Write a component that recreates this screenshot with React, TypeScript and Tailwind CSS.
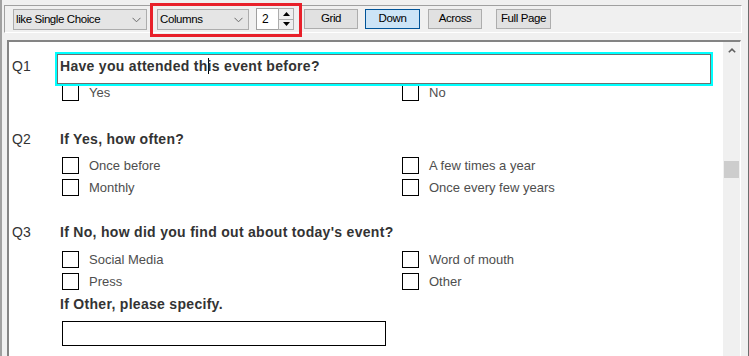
import React from "react";

const Chevron = () => (
  <svg width="9" height="6" viewBox="0 0 9 6" className="shrink-0">
    <polyline points="0.5,0.8 4.5,4.8 8.5,0.8" fill="none" stroke="#6a6a6a" strokeWidth="1" />
  </svg>
);

const Select = ({ label, className }: { label: string; className: string }) => (
  <div
    className={
      "h-[21px] flex items-center justify-between pl-[2px] pr-[5px] bg-[#e5e5e5] border border-[#adadad] " + className
    }
  >
    <span className="text-[11.5px] tracking-[-0.4px] text-black leading-none">{label}</span>
    <Chevron />
  </div>
);

const Button = ({ label, active, className }: { label: string; active?: boolean; className: string }) => (
  <div
    className={
      "h-[20px] flex items-center justify-center text-[11.5px] tracking-[-0.4px] text-black border " +
      (active ? "bg-[#cce4f7] border-[#005499] " : "bg-[#e1e1e1] border-[#adadad] ") +
      className
    }
  >
    {label}
  </div>
);

const Spinner = () => (
  <div className="flex ml-[7px] -mt-[1px]">
    <div className="w-[22px] h-[22px] bg-white border border-[#a0a0a0] border-r-0 pl-[5px] flex items-center text-[12px]">
      2
    </div>
    <div className="w-[16px] h-[22px] border border-[#adadad] bg-[#efefef] flex flex-col">
      <div className="flex-1 flex items-center justify-center border-b border-[#adadad]">
        <svg width="7" height="4" viewBox="0 0 7 4">
          <polygon points="0,4 3.5,0 7,4" fill="#000" />
        </svg>
      </div>
      <div className="flex-1 flex items-center justify-center">
        <svg width="7" height="4" viewBox="0 0 7 4">
          <polygon points="0,0 3.5,4 7,0" fill="#000" />
        </svg>
      </div>
    </div>
  </div>
);

const Option = ({ label }: { label: string }) => (
  <div className="flex items-center h-[22px] pl-[7px]">
    <div className="w-[17px] h-[17px] border border-black bg-white shrink-0" />
    <span className="ml-[10px] text-[13px] text-[#4e4e4e] leading-none">{label}</span>
  </div>
);

const Options = ({ items, className }: { items: string[]; className: string }) => (
  <div className={"grid grid-cols-[340px_1fr] grid-flow-col grid-rows-2 " + className}>
    {items.map((it) => (
      <Option key={it} label={it} />
    ))}
  </div>
);

const Options1 = ({ left, right, className }: { left: string; right: string; className: string }) => (
  <div className={"grid grid-cols-[340px_1fr] " + className}>
    <Option label={left} />
    <Option label={right} />
  </div>
);

const Label = ({ text, className }: { text: string; className?: string }) => (
  <div className={"w-[43px] shrink-0 text-[14px] leading-[18px] text-[#333] " + (className ?? "")}>{text}</div>
);

const Title = ({ children, className }: { children: React.ReactNode; className?: string }) => (
  <div className={"text-[14px] leading-[18px] font-bold tracking-[0.3px] text-[#333] " + (className ?? "")}>
    {children}
  </div>
);

export default function App() {
  return (
    <div className="w-[749px] h-[356px] overflow-hidden bg-[#f0f0f0] flex flex-col border-l-2 border-[#a0a0a0] border-r border-r-[#6d6d6d] font-['Liberation_Sans',Arial,sans-serif]">
      {/* toolbar */}
      <div className="h-[40px] pt-[5px] pl-[2px] shrink-0">
        <div className="w-[738px] h-[28px] border-t border-l border-[#a0a0a0] border-b border-r border-b-white border-r-white flex items-start">
          <Select label="like Single Choice" className="w-[134px] ml-[8px] mt-[3px]" />
          <div className="w-[152px] h-[34px] ml-[3px] -mt-[3px] border-[3px] border-[#e8202a] flex items-start pl-[4px] pt-[3px]">
            <Select label="Columns" className="w-[92px]" />
            <Spinner />
          </div>
          <Button label="Grid" className="w-[54px] ml-[2px] mt-[3px]" />
          <Button label="Down" active className="w-[55px] ml-[7px] mt-[3px]" />
          <Button label="Across" className="w-[54px] ml-[8px] mt-[3px]" />
          <Button label="Full Page" className="w-[55px] ml-[14px] mt-[3px]" />
        </div>
      </div>

      {/* page */}
      <div className="flex-1 ml-[5px] w-[734px] border-t-2 border-l-2 border-[#848484] border-r border-r-white flex">
        <div className="w-[714px] bg-white pt-[10px] pl-[3px] overflow-hidden">
          {/* Q1 */}
          <div className="flex">
            <Label text="Q1" className="mt-[5px]" />
            <div>
              <div className="relative z-10 w-[658px] border-2 border-[#00ffff]">
                <div className="h-[30px] border border-[#6f6f6f] pt-[2px] pl-[2px]">
                  <Title>
                    Have you attended th
                    <span className="inline-block w-0 h-[16px] border-l border-black align-[-3px] -mr-px" />
                    is event before?
                  </Title>
                </div>
              </div>
              <Options1 left="Yes" right="No" className="-mt-[5px]" />
            </div>
          </div>

          {/* Q2 */}
          <div className="flex mt-[27px]">
            <Label text="Q2" />
            <div>
              <Title className="pl-[5px]">If Yes, how often?</Title>
              <Options
                items={["Once before", "Monthly", "A few times a year", "Once every few years"]}
                className="mt-[6px]"
              />
            </div>
          </div>

          {/* Q3 */}
          <div className="flex mt-[25px]">
            <Label text="Q3" />
            <div>
              <Title className="pl-[5px]">If No, how did you find out about today's event?</Title>
              <Options items={["Social Media", "Press", "Word of mouth", "Other"]} className="mt-[7px]" />
              <Title className="pl-[5px] mt-[3px]">If Other, please specify.</Title>
              <div className="ml-[7px] mt-[8px] w-[324px] h-[25px] border border-black bg-white" />
            </div>
          </div>
        </div>

        {/* scrollbar */}
        <div className="w-[17px] bg-[#f0f0f0] flex flex-col items-center">
          <div className="h-[17px] flex items-center justify-center">
            <svg width="8" height="5" viewBox="0 0 8 5">
              <polyline points="0.8,4.3 4,1.2 7.2,4.3" fill="none" stroke="#606060" strokeWidth="1.6" />
            </svg>
          </div>
          <div className="w-[15px] h-[17px] mt-[102px] bg-[#cdcdcd]" />
        </div>
      </div>
    </div>
  );
}
